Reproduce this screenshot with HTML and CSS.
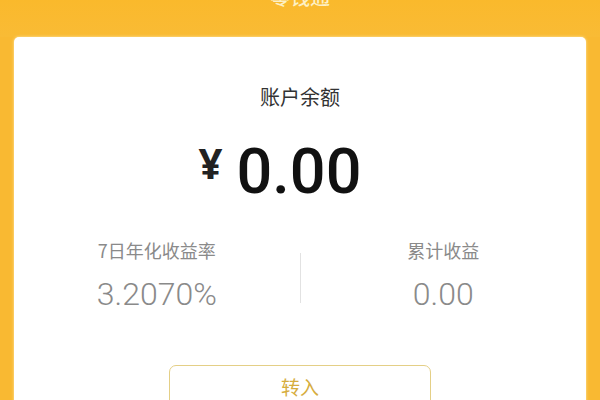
FILE: index.html
```html
<!DOCTYPE html>
<html lang="zh">
<head>
<meta charset="utf-8">
<link rel="stylesheet" href="styles.css">
</head>
<body>
<div class="page">
  <header class="top">
    <div class="title">零钱通</div>
  </header>
  <section class="card">
    <div class="label">账户余额</div>
    <div class="balance">
      <span class="yen">¥</span>
      <span class="amount">0.00</span>
    </div>
    <div class="stats">
      <div class="stat">
        <div class="stat-label">7日年化收益率</div>
        <div class="stat-value">3.2070%</div>
      </div>
      <div class="divider"></div>
      <div class="stat">
        <div class="stat-label">累计收益</div>
        <div class="stat-value">0.00</div>
      </div>
    </div>
    <div class="actions">
      <button class="btn">转入</button>
    </div>
  </section>
</div>
</body>
</html>
```
FILE: styles.css
```css
html, body {
  margin: 0;
  padding: 0;
}
body {
  width: 600px;
  height: 400px;
  overflow: hidden;
  background: #f9b932;
  font-family: "Noto Sans CJK SC", "Noto Sans", sans-serif;
}
.page {
  display: flex;
  flex-direction: column;
  height: 400px;
}
.top {
  flex-shrink: 0;
  height: 37px;
  display: flex;
  justify-content: center;
  background: linear-gradient(180deg, #fab92c 0%, #f9bb35 100%);
}
.title {
  margin-top: -14px;
  font-size: 20px;
  line-height: 22px;
  color: #fdf0c4;
  font-weight: 500;
}
.card {
  flex: 1 0 auto;
  margin: 0 14px;
  background: #fff;
  border-radius: 5px 5px 0 0;
  display: flex;
  flex-direction: column;
  align-items: center;
  box-shadow: 0 0 3px rgba(255, 240, 190, 0.9);
}
.label {
  margin-top: 48px;
  font-size: 20px;
  line-height: 24px;
  color: #333;
}
.balance {
  margin-top: 30px;
  display: flex;
  align-items: flex-start;
  color: #111;
  margin-right: 40px;
}
.yen {
  font-family: "Noto Sans", sans-serif;
  font-weight: 700;
  font-size: 42px;
  line-height: 50px;
  margin-top: -1px;
  margin-right: 14px;
  color: #222;
}
.amount {
  font-family: Roboto, sans-serif;
  font-size: 63px;
  line-height: 66px;
  font-weight: 500;
}
.stats {
  align-self: stretch;
  margin-top: 33px;
  display: flex;
  align-items: flex-start;
}
.stat {
  flex: 1;
  display: flex;
  flex-direction: column;
  align-items: center;
}
.stat-label {
  font-size: 18px;
  line-height: 24px;
  color: #8a8a8a;
}
.stat-value {
  margin-top: 14px;
  font-family: Roboto, sans-serif;
  font-weight: 300;
  font-size: 32px;
  line-height: 36px;
  color: #8a8a8a;
}
.divider {
  width: 1px;
  height: 50px;
  margin-top: 15px;
  background: #e2e2e2;
}
.actions {
  margin-top: 53px;
}
.btn {
  width: 262px;
  height: 44px;
  border: 1.5px solid #e4cf86;
  border-radius: 7px;
  background: #fff;
  color: #d6ad3e;
  font-family: "Noto Sans CJK SC", sans-serif;
  font-size: 19px;
  display: flex;
  justify-content: center;
  align-items: flex-start;
  padding-top: 7px;
}
```
